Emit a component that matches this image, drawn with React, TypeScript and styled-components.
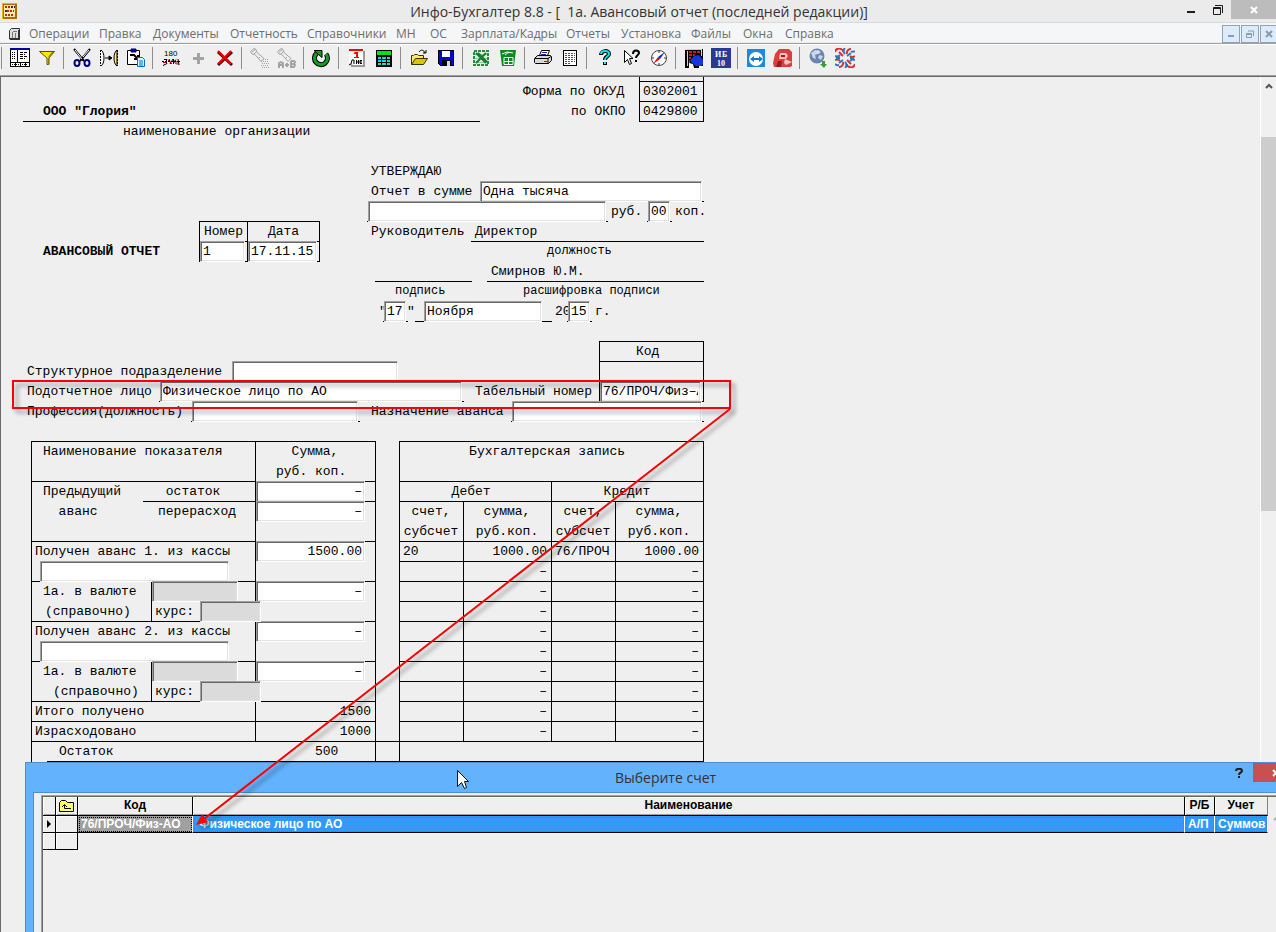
import React from "react";
import styled, { createGlobalStyle, css } from "styled-components";

const UI = `"Open Sans", "Noto Sans", sans-serif`;
const MONO = `"Liberation Mono", monospace`;
const GREY = "#efefef";

const Global = createGlobalStyle`
  * { box-sizing: border-box; }
  body { margin: 0; background: ${GREY}; }
  button, input { font: inherit; color: inherit; }
  button { border: 0; padding: 0; background: none; }
`;

/* ---------- window frame ---------- */

const Page = styled.div`
  position: relative;
  display: flex;
  flex-direction: column;
  height: 100vh;
  overflow: hidden;
  background: ${GREY};
  font-family: ${UI};
`;

const TitleBar = styled.header`
  display: flex;
  align-items: flex-start;
  justify-content: space-between;
  height: 23px;
  background: #ebebeb;
  border-bottom: 1px solid #dadada;
`;

const TitleSide = styled.div<{ $end?: boolean }>`
  display: flex;
  flex: 1;
  justify-content: ${(p) => (p.$end ? "flex-end" : "flex-start")};
  padding-left: ${(p) => (p.$end ? 0 : 2)}px;
  padding-top: ${(p) => (p.$end ? 0 : 3)}px;
`;

const Title = styled.h1`
  margin: 0;
  font-size: 14px;
  line-height: 23px;
  font-weight: 400;
  color: #333;
  white-space: pre;
`;

const FrameButton = styled.button<{ $w: number; $bg?: string }>`
  display: flex;
  align-items: center;
  justify-content: center;
  width: ${(p) => p.$w}px;
  height: 19px;
  background: ${(p) => p.$bg ?? "transparent"};
`;

const MenuBar = styled.nav`
  display: flex;
  align-items: center;
  height: 22px;
  padding-left: 8px;
  background: #f5f6f7;
  border-bottom: 1px solid #fff;
  box-shadow: inset 0 -1px #a0a0a0, inset 0 -2px #ebebeb;
`;

const MenuItems = styled.div`
  display: flex;
  flex: 1;
  margin-left: 8px;
`;

const MenuItem = styled.button<{ $w: number }>`
  width: ${(p) => p.$w}px;
  font-size: 12px;
  line-height: 18px;
  color: #6d6d6d;
  text-align: left;
  white-space: nowrap;
`;

const MdiButtons = styled.div`
  display: flex;
  gap: 1px;
  margin-right: -2px;
`;

const MdiButton = styled.button`
  display: flex;
  align-items: center;
  justify-content: center;
  width: 18px;
  height: 18px;
  border: 1px solid #93a3b5;
  background: #dcebfa;
`;

const ToolBar = styled.div`
  display: flex;
  align-items: center;
  height: 32px;
  padding: 0 0 5px 1px;
  border-bottom: 1px solid #696969;
  box-shadow: inset 0 -1px #a0a0a0;
`;

const ToolButton = styled.button`
  display: flex;
  align-items: center;
  justify-content: center;
  width: 27px;
  height: 24px;
`;

const Divider = styled.span<{ $first?: boolean }>`
  width: 1px;
  height: 22px;
  margin: ${(p) => (p.$first ? "0 4px 0 0" : "0 4px 0 3px")};
  background: #8e8e8e;
`;

const Workspace = styled.main`
  position: relative;
  display: flex;
  flex: 1;
  min-height: 0;
  overflow: hidden;
  border-left: 1px solid #696969;
`;

const Sheet = styled.form`
  flex: 1;
  min-width: 0;
  overflow: hidden;
  padding-left: 6px;
  font-family: ${MONO};
  font-size: 13px;
  line-height: 20px;
  color: #000;
`;

const ScrollBar = styled.div`
  display: flex;
  flex-direction: column;
  align-items: stretch;
  width: 16px;
  border-left: 1px solid #fff;
  background: #f0f0f0;
`;

const ScrollArrow = styled.button`
  display: flex;
  justify-content: center;
  height: 60px;
  padding-top: 6px;
`;

const ScrollThumb = styled.div`
  height: 374px;
  background: #cdcdcd;
`;

/* ---------- form lines: one unit is one character, 8px ---------- */

const Row = styled.div<{ $h?: number }>`
  display: flex;
  height: ${(p) => p.$h ?? 20}px;
`;

type CellProps = {
  $n?: number;
  $line?: boolean;
  $box?: boolean;
  $center?: boolean;
  $bold?: boolean;
  $small?: boolean;
  $pad?: number;
};

const Cell = styled.div<CellProps>`
  flex: none;
  width: ${(p) => (p.$n ? `${p.$n * 8 + (p.$box || p.$line ? 1 : 0)}px` : "auto")};
  margin-right: ${(p) => (p.$box || p.$line ? -1 : 0)}px;
  padding-left: ${(p) => (p.$center ? 0 : p.$pad ?? 4)}px;
  font-size: ${(p) => (p.$small ? 12 : 13)}px;
  line-height: 19px;
  white-space: pre;
  text-align: ${(p) => (p.$center ? "center" : "left")};
  font-weight: ${(p) => (p.$bold ? 700 : 400)};
  ${(p) => (p.$line || p.$box) && css`border-bottom: 1px solid #000;`}
  ${(p) => p.$box && css`
    border-left: 1px solid #000;
    border-right: 1px solid #000;
  `}
`;

const Label = styled(Cell).attrs({ as: "label" })<{ htmlFor?: string }>``;

const FieldCell = styled(Cell)`
  padding: 0 1px 0 ${(p) => (p.$box ? 0 : 1)}px;
`;

const Field = styled.input<{ $right?: boolean }>`
  display: block;
  width: calc(100% - 1px);
  height: 21px;
  margin: -1px 0;
  padding: 0 2px;
  border: 1px solid;
  border-color: #a0a0a0 #fff #fff #a0a0a0;
  border-radius: 0;
  box-shadow: inset 1px 1px #696969, inset -1px -1px #e3e3e3;
  background: #fff;
  outline: none;
  text-align: ${(p) => (p.$right ? "right" : "left")};
  &:disabled { background: #dbdbdb; }
`;

/* ---------- form tables ---------- */

const Tables = styled.div`
  display: flex;
  align-items: flex-start;
  margin-left: 24px;
`;

const FormTable = styled.table<{ $w: number; $closed?: boolean }>`
  flex: none;
  width: ${(p) => p.$w}px;
  table-layout: fixed;
  border-collapse: separate;
  border-spacing: 0;
  border-right: 1px solid #000;
  border-bottom: ${(p) => (p.$closed ? 1 : 0)}px solid #000;
`;

const Col = styled.col<{ $w: number }>`
  width: ${(p) => p.$w}px;
`;

const Td = styled.td<{ $h?: number; $align?: string; $l?: boolean; $pad?: number }>`
  height: ${(p) => p.$h ?? 20}px;
  padding: 0 4px 0 ${(p) => p.$pad ?? 3}px;
  border-top: 1px solid #000;
  border-left: ${(p) => (p.$l === false ? 0 : 1)}px solid #000;
  vertical-align: top;
  text-align: ${(p) => p.$align ?? "left"};
  font-weight: 400;
  line-height: 19px;
  white-space: pre;
`;

const SumTd = styled(Td)`
  padding: 0 9px 0 0;
`;

const Lines = styled.div`
  margin-bottom: -1px;
  line-height: 20px;
`;

const Line = styled.div<{ $pad?: number }>`
  display: flex;
  height: 20px;
  padding-left: ${(p) => p.$pad ?? 0}px;
  &:last-child { height: 19px; }
`;

const Slot = styled.div<{ $w: number }>`
  flex: none;
  width: ${(p) => p.$w}px;
`;

const LastTd = styled(Td)`
  padding: 0 0 0 15px;
`;

const Rest = styled.div`
  display: flex;
  height: 20px;
  padding-left: 12px;
  border-bottom: 1px solid #000;
`;

const Bridge = styled.div`
  align-self: flex-end;
  width: 23px;
  height: 21px;
  border: solid #000;
  border-width: 1px 0;
`;

/* ---------- account picker window ---------- */

const Dialog = styled.section`
  position: absolute;
  left: 24px;
  right: -30px;
  bottom: 0;
  height: 170px;
  display: flex;
  flex-direction: column;
  padding: 0 8px;
  border: 1px solid #4b8fd2;
  border-bottom: 0;
  background: #63b2fe;
`;

const DialogBar = styled.div`
  display: flex;
  justify-content: space-between;
  height: 29px;
  flex: none;
`;

const DialogSide = styled.div`
  display: flex;
  flex: 1;
  justify-content: flex-end;
  margin-right: -1px;
`;

const DialogTitle = styled.h2`
  margin: 0;
  font-size: 14px;
  line-height: 29px;
  font-weight: 400;
  color: #333;
`;

const DialogBody = styled.div`
  flex: 1;
  display: flex;
  padding: 2px 7px 0;
  margin: 0 -1px;
  border: 1px solid #4b8fd2;
  border-bottom: 0;
  background: ${GREY};
`;

const Grid = styled.div`
  flex: 1;
  display: flex;
  align-items: flex-start;
  border: solid #a0a0a0;
  border-width: 1px 0 0 1px;
  box-shadow: inset 1px 1px #696969;
  padding: 1px 2px 0 1px;
`;

const GridTable = styled.table`
  flex: 1;
  width: 100%;
  table-layout: fixed;
  border-collapse: separate;
  border-spacing: 0;
  font-family: "Liberation Sans", sans-serif;
  font-size: 12px;
  line-height: 16px;
  font-weight: 700;
`;

const GridTh = styled.th<{ $light?: boolean }>`
  height: 19px;
  padding: 0;
  border-bottom: 1px solid #000;
  border-right: 1px solid ${(p) => (p.$light ? "#808080" : "#000")};
  box-shadow: inset 1px 1px #fff, inset 0 -1px #a0a0a0;
  vertical-align: top;
  overflow: hidden;
  svg { display: block; margin: 3px auto 0; }
`;

const GridTd = styled.td<{ $tone?: "grey" | "blue" }>`
  height: 17px;
  padding: 0 0 0 3px;
  overflow: hidden;
  white-space: nowrap;
  border-bottom: 1px solid #000;
  border-right: 1px solid #000;
  box-shadow: inset 1px 1px #fff;
  svg { display: block; }
  ${(p) => p.$tone && css`
    color: #fff;
    line-height: 14px;
    border-right-color: #fff;
    box-shadow: none;
    background: ${p.$tone === "blue" ? "#3399ff" : "#a0a0a0"};
    outline: 1px dotted ${p.$tone === "blue" ? "#c06010" : "#000"};
    outline-offset: -2px;
  `}
`;

const GridScroll = styled.div`
  width: 20px;
  padding: 7px 0 0 5px;
`;

const Overlay = styled.svg`
  position: absolute;
  left: 0;
  top: 0;
  pointer-events: none;
`;

/* ---------- toolbar drawings ---------- */

const Torch = () => (
  <g fill="none" stroke="#a3a3a3">
    <path d="M.5 3.500L4 .5l2 1 1 3 7 6-3 3-6-7-3-.5z" />
    <path d="M2 4l4-3M4 6l3-3M9 9l1 1" />
  </g>
);

const icons: Record<string, React.ReactNode> = {
  "Журнал": (
    <g shapeRendering="crispEdges" fill="none">
      <path fill="#fff" stroke="#000" d="M.5.5h19v18H.5z" />
      <path fill="#0000a8" d="M0 0h20v2H0z" />
      <path stroke="#000" d="M7.500 2v12M0 14.500h20M5.500 14v5M10.500 14v5M15.500 14v5" />
      <path stroke="#000" strokeDasharray="1 1" d="M2 4.500h4M2 6.500h4M2 8.500h4M2 10.500h4M2 16.500h16" />
      <path stroke="#000" strokeDasharray="3 1" d="M10 4.500h7M10 6.500h5M10 8.500h7M10 10.500h5" />
    </g>
  ),
  "Фильтр": (
    <g>
      <path fill="#ffe800" stroke="#5a5200" d="M2.500 3.500h15l-5.500 6.500v6.500h-2v-6.500z" />
      <path fill="#8a7b00" d="M11 9h1l5-5h-2zM11 10h1v7h-1z" />
    </g>
  ),
  "Вырезать": (
    <g fill="none">
      <path stroke="#000" strokeWidth="2" d="M2 1l10 12M18 1L8 13" />
      <path stroke="#fff" d="M3 2l7 9M17 2l-6 7" />
      <g stroke="#000080" strokeWidth="2"><ellipse cx="5" cy="15" rx="2.500" ry="3" /><ellipse cx="15" cy="15" rx="2.500" ry="3" /></g>
    </g>
  ),
  "Связать": (
    <g>
      <path fill="none" stroke="#000" strokeDasharray="2 1" d="M1.500 2v16M18.500 2v16" />
      <path fill="#fff" stroke="#000" d="M2 2c4 2 4 14 0 16" />
      <path fill="#ffe95a" stroke="#000" d="M18 2c-4 2-4 14 0 16z" />
      <path stroke="#000" fill="#000" d="M6 10h5M10 8l3 2-3 2z" />
    </g>
  ),
  "Вставить": (
    <g>
      <path fill="#fff" stroke="#000" d="M1.500 2.500h12v14h-12z" />
      <path fill="#0000b0" stroke="#000080" d="M5 1h5v3H5z" />
      <path stroke="#000" strokeWidth="2" fill="none" d="M4 7h4l4 4M12 7v4H8" />
      <path fill="#d8f4ff" stroke="#0070c0" d="M11.500 9.500h5l2 2v7h-7z" />
      <path stroke="#0070c0" d="M13 13h4M13 15h4M13 17h4" />
    </g>
  ),
  "Сумма": (
    <g>
      <text x="3" y="8" fontSize="8" fontFamily="Liberation Sans, sans-serif">180</text>
      <g fill="none">
        <path stroke="#000" d="M3 11.500h3l-1 2 1 2-4 2M8 11l2 5M12 11l-3 5M12.500 11v5M15 11.500l-2 2 3 3M16 13.500h3M17 11l1 6" />
        <path stroke="#c00000" d="M2 14.500h3M7 12l4 4M14 12l4 5" />
        <path stroke="#000" d="M1 13.500h18" strokeDasharray="2 1" />
      </g>
    </g>
  ),
  "Добавить": <path fill="#a3a3a3" d="M9 5h3v4h4v3h-4v4H9v-4H5V9h4z" />,
  "Удалить": (
    <g fill="none">
      <path stroke="#4a0000" strokeWidth="3" d="M3 4l14 13M17 4L3 17" />
      <path stroke="#f00000" strokeWidth="2" d="M3 3l13 13M16 3L3 16" />
    </g>
  ),
  "Поиск": (
    <g><Torch /><path stroke="#a3a3a3" strokeDasharray="1 1" d="M13 11.500h5M11 13.500h8M12 15.500h7M11 17.500h8M12 19.500h7" /></g>
  ),
  "Замена": (
    <g>
      <Torch />
      <g fill="none" stroke="#a3a3a3" strokeWidth="2"><path d="M2 20v-5l2-1 2 1v5M2 17h4M8 17h4M10 15v4M14 13v6h3l1-2-1-1h-3M14 13h3l1 1-1 2" /></g>
    </g>
  ),
  "Обновить": (
    <g fill="none">
      <path stroke="#000" strokeWidth="5" d="M5 5a6.500 6.500 0 1 0 9 1" />
      <path stroke="#12a020" strokeWidth="3" d="M5 5a6.500 6.500 0 1 0 9 1" />
      <path fill="#12a020" stroke="#000" d="M2 2.500h8v7z" />
    </g>
  ),
  "Календарь": (
    <g>
      <path fill="#9a9a9a" d="M4 3h14v16H4z" />
      <path fill="#fff" d="M2 1h14v16H6l-4-3z" />
      <path fill="#f00" d="M2 1h14v2H2zM8 4h3v5h1v1H7V9h2V6H7V5z" />
      <path stroke="#000" fill="none" d="M2 17l2-1 1-4h2v4M9.500 12v4M9 14h2.500M11.500 12v4M15 12.500h-2v3h2M13 14h2" />
    </g>
  ),
  "Калькулятор": (
    <g shapeRendering="crispEdges">
      <path fill="#000" d="M2 2h16v17H2z" />
      <path fill="#00e020" d="M3 3h14v4H3z" />
      <path fill="#18d8d8" d="M4 9h3v2H4zM8 9h4v2H8zM13 9h3v2h-3zM4 12h3v2H4zM8 12h4v2H8zM13 12h3v2h-3zM4 15h3v2H4zM8 15h4v2H8zM13 15h3v2h-3z" />
    </g>
  ),
  "Открыть": (
    <g>
      <path fill="#ffe95a" stroke="#3a3300" d="M2.500 16.500v-9h2l1-1h3l1 1h5v3" />
      <path fill="#d8c800" stroke="#3a3300" d="M2.500 16.500l4-6h12l-4 6z" />
      <path fill="none" stroke="#000" d="M10 4c2-3 5-2 6 1M17 2v3h-3" />
    </g>
  ),
  "Сохранить": (
    <g shapeRendering="crispEdges">
      <path fill="#0000e0" stroke="#000" d="M2.500 2.500h15v15h-13l-2-2z" />
      <path fill="#fff" d="M6 3h8v6H6z" />
      <path fill="#000" d="M6 12h9v6H6z" />
      <path fill="#d8d8d8" d="M11 13h3v5h-3z" />
    </g>
  ),
  "Excel": (
    <g>
      <path fill="#dff0e2" stroke="#2a8a3e" strokeWidth="2" strokeDasharray="3 1" d="M3 3h14v14H3z" />
      <path stroke="#8fc79c" d="M4 6.500h12M4 10.500h12M4 14.500h12" />
      <path stroke="#1a7a30" strokeWidth="2" d="M5 5l10 10M7 5l9 9M15 5L5 15" />
    </g>
  ),
  "Таблица": (
    <g>
      <path fill="#0c8a1c" d="M2 2h16l-2 16H4z" />
      <path fill="none" stroke="#fff" d="M4 6l5-2 6 1M6 9.500h9v7H6zM10.500 9v8M6 13.500h9M7 7l4-3" />
    </g>
  ),
  "Печать": (
    <g>
      <path fill="#fff" stroke="#000" d="M6.500 7.500l2-5h8l-2 5z" />
      <path stroke="#2030b0" d="M9 4.500h5M8 6.500h5" />
      <path fill="#d8d8d8" stroke="#000" d="M1.500 10.500l3-3h13l1 1v4l-3 3h-13l-1-1z" />
      <path fill="none" stroke="#000" d="M2 10.500h13v5M15 10.500l3-2" />
      <path stroke="#d00000" d="M11 13.500h3" />
    </g>
  ),
  "Просмотр": (
    <g shapeRendering="crispEdges">
      <path fill="#fff" stroke="#000" d="M3.500 2.500h13v15h-13z" />
      <path stroke="#555" strokeDasharray="2 1" d="M5 5.500h10M5 7.500h10M5 9.500h10M5 11.500h10M5 13.500h10M5 15.500h6" />
    </g>
  ),
  "Справка": (
    <g fill="none">
      <path stroke="#000" strokeWidth="4" d="M6 7c0-5 8-5 8-1 0 3-4 2-4 6M10 14v3" />
      <path stroke="#18dfe8" strokeWidth="2" d="M6 6c0-4 8-4 8 0 0 3-4 2-4 6M10 14v2" />
    </g>
  ),
  "Что это": (
    <g>
      <path fill="#fff" stroke="#000" d="M2.500 2.500v12l3-3 2 5 2-1-2-5h3.500z" />
      <path fill="none" stroke="#000" strokeWidth="2" d="M11 6c0-5 6-4 6-1 0 2-3 2-3 5M14 12v2" />
    </g>
  ),
  "Навигатор": (
    <g>
      <circle cx="10" cy="10" r="7.500" fill="#fff" stroke="#444" />
      <path fill="#e00000" d="M4 16l5-7 2 2z" />
      <path fill="#1020d0" d="M16 4l-5 7-2-2z" />
      <path stroke="#333" d="M10 3v2M10 15v2M3 10h2M15 10h2" />
    </g>
  ),
  "Выход": (
    <g>
      <path fill="#000" d="M1 1h18v19H1z" />
      <path fill="#ffe000" d="M1 1h17v1H1zM3 3h1v15H3zM17 2h1v6h-1z" />
      <path fill="#c02020" d="M5 3h3v2H5zM9 3h3v2H9zM13 3h3v2h-3zM5 6h3v2H5zM9 6h2v2H9zM5 9h2v2H5zM5 12h1v4H5z" />
      <path fill="#1438e0" d="M6 13l4-5 5-1 4 5v4l-2 2h-5z" />
      <path fill="#fff" d="M5 15l4 1 1 4H5zM15 18h4v2h-4z" />
    </g>
  ),
  "ИБ 10": (
    <g>
      <path fill="#2a3a94" d="M0 0h20v20H0z" />
      <g fill="#fff" fontFamily="Liberation Serif, serif" fontWeight="700" fontSize="8">
        <text x="4" y="9">И</text><text x="11" y="9">Б</text><text x="6" y="18">10</text>
      </g>
    </g>
  ),
  "TeamViewer": (
    <g>
      <path fill="#1a8ae0" d="M1 1h18v18H1z" />
      <circle cx="10" cy="11" r="7" fill="#fff" />
      <path fill="#1a78d0" d="M4 11l4-3v2h5V8l4 3-4 3v-2H8v2z" />
    </g>
  ),
  "Удалённый доступ": (
    <g>
      <path fill="#d84040" d="M6 1h10l3 3v14l-2 1H1l-1-4 2-9z" />
      <path fill="#f6c4bc" d="M7 5h6l2 3-2 3H6zM12 11l7 3-6 3-2-2z" />
      <path fill="#a01818" d="M8 7h4v2H8zM5 13h4l-1 6H3z" />
    </g>
  ),
  "Интернет": (
    <g>
      <circle cx="9" cy="8" r="7.500" fill="#6a84b4" />
      <path fill="#c8d6ec" d="M3 5l4-3 4 1-1 3-3 1 1 4-3-1zM11 7l4 1-2 4-3-2z" />
      <path fill="#e8eef8" d="M8 3l3-1 2 3-3 1z" opacity=".7" />
      <path fill="#32a032" d="M14 13h3v3h2l-3 4-4-4h2z" />
    </g>
  ),
  "Сервис": (
    <g fill="none" strokeWidth="2">
      <path stroke="#d83030" d="M0 4a4 4 0 0 1 7-2M4 4l4 4M8 1v3M16 1a4 4 0 0 0-4 5M20 8a4 4 0 0 1-5 0M0 12a4 4 0 0 1 5 1M4 19a4 4 0 0 0 4-5M12 12l4 4M12 19v-3M20 16a4 4 0 0 1-7 2" />
      <path stroke="#2878c0" d="M0 8a4 4 0 0 0 5-1M10 0a4 4 0 0 0 0 6M20 4a4 4 0 0 0-4 0M12 8l4-3M8 12l-4 3M0 16a4 4 0 0 0 4 1M10 20a4 4 0 0 0 0-6M20 12a4 4 0 0 0-5 1" />
      <path stroke="#2878c0" d="M1 10h4M15 10h4" />
    </g>
  ),
};

const toolGroups: string[][] = [
  ["Журнал", "Фильтр"],
  ["Вырезать", "Связать", "Вставить"],
  ["Сумма", "Добавить", "Удалить"],
  ["Поиск", "Замена"],
  ["Обновить"],
  ["Календарь", "Калькулятор"],
  ["Открыть", "Сохранить"],
  ["Excel", "Таблица"],
  ["Печать", "Просмотр"],
  ["Справка", "Что это", "Навигатор"],
  ["Выход", "ИБ 10"],
  ["TeamViewer", "Удалённый доступ"],
  ["Интернет", "Сервис"],
];

const menu: [string, number][] = [
  ["Операции", 70], ["Правка", 54], ["Документы", 77], ["Отчетность", 77],
  ["Справочники", 89], ["МН", 34], ["ОС", 31], ["Зарплата/Кадры", 105],
  ["Отчеты", 55], ["Установка", 70], ["Файлы", 52], ["Окна", 42], ["Справка", 50],
];

/* ---------- parts ---------- */

type InputProps = { n: number; label: string; id?: string; value?: string; box?: boolean };

const InputCell = ({ n, label, id, value = "", box }: InputProps) => (
  <FieldCell $n={n} $box={box} $line={!box}>
    <Field id={id} aria-label={id ? undefined : label} defaultValue={value} />
  </FieldCell>
);

const SumCell = ({ h, label, value }: { h?: number; label: string; value: string }) => (
  <SumTd $h={h}>
    <Field $right aria-label={label} defaultValue={value} />
  </SumTd>
);

const Advance = ({ no, sum, indent }: { no: number; sum: string; indent: number }) => (
  <>
    <tr>
      <Td colSpan={3} $h={40}>
        <Line>{`Получен аванс ${no}. из кассы`}</Line>
        <Line $pad={5}>
          <Slot $w={190}><Field aria-label={`Касса ${no}`} /></Slot>
        </Line>
      </Td>
      <SumCell h={40} label={`Сумма аванса ${no}`} value={sum} />
    </tr>
    <tr>
      <Td colSpan={2} $h={40}>
        <Line $pad={8}>1а. в валюте</Line>
        <Line $pad={indent}>(справочно)</Line>
      </Td>
      <Td $h={40} $pad={0}>
        <Line><Slot $w={87}><Field disabled aria-label={`Валюта ${no}`} /></Slot></Line>
        <Line $pad={3}>
          <Slot $w={45}>курс:</Slot>
          <Slot $w={62}><Field disabled aria-label={`Курс ${no}`} /></Slot>
        </Line>
      </Td>
      <SumCell h={40} label={`Сумма в валюте ${no}`} value="–" />
    </tr>
  </>
);

const IndicatorTable = () => (
  <FormTable $w={345}>
    <colgroup>
      <Col $w={112} /><Col $w={8} /><Col $w={104} /><Col $w={120} />
    </colgroup>
    <tbody>
      <tr>
        <Td as="th" colSpan={3} $h={40} $pad={11}>Наименование показателя</Td>
        <Td as="th" $h={40} $align="center"><Lines>{"Сумма,\nруб. коп. "}</Lines></Td>
      </tr>
      <tr>
        <Td rowSpan={2} $h={60} $pad={11}><Lines>{"Предыдущий\n  аванс"}</Lines></Td>
        <Td colSpan={2} $l={false} $align="center" $pad={0}>остаток </Td>
        <SumCell label="Остаток" value="–" />
      </tr>
      <tr>
        <Td colSpan={2} $h={40} $l={false} $align="center" $pad={0}>перерасход</Td>
        <SumCell h={40} label="Перерасход" value="–" />
      </tr>
      <Advance no={1} sum="1500.00" indent={10} />
      <Advance no={2} sum="–" indent={18} />
      <tr><Td colSpan={3}>Итого получено</Td><Td $align="right">1500</Td></tr>
      <tr><Td colSpan={3}>Израсходовано</Td><Td $align="right">1000</Td></tr>
      <tr>
        <LastTd colSpan={4} $h={21}>
          <Rest><Slot $w={256}>Остаток</Slot>500</Rest>
        </LastTd>
      </tr>
    </tbody>
  </FormTable>
);

const entries = [["20", "1000.00", "76/ПРОЧ", "1000.00"], ...Array.from({ length: 9 }, () => ["", "–", "", "–"])];

const EntryTable = () => (
  <FormTable $w={305} $closed>
    <colgroup>
      <Col $w={64} /><Col $w={88} /><Col $w={64} /><Col $w={88} />
    </colgroup>
    <tbody>
      <tr><Td as="th" colSpan={4} $h={40} $align="center">Бухгалтерская запись </Td></tr>
      <tr>
        <Td as="th" colSpan={2} $align="center">Дебет </Td>
        <Td as="th" colSpan={2} $align="center">Кредит</Td>
      </tr>
      <tr>
        {["счет,\nсубсчет", "сумма,\nруб.коп.", "счет,\nсубсчет", "сумма,\nруб.коп."].map((t, i) => (
          <Td as="th" key={i} $h={40} $align="center"><Lines>{t}</Lines></Td>
        ))}
      </tr>
      {entries.map((r, i) => (
        <tr key={i}>
          {r.map((t, j) => <Td key={j} $align={j % 2 ? "right" : "left"}>{t}</Td>)}
        </tr>
      ))}
      <tr><Td colSpan={4} /></tr>
    </tbody>
  </FormTable>
);

const ReportForm = () => (
  <Sheet>
    <Row $h={5}><Cell $n={79} /><Cell $n={8} $box /></Row>
    <Row><Cell $n={64} /><Cell $n={15}>Форма по ОКУД</Cell><Cell $n={8} $box $pad={3}>0302001</Cell></Row>
    <Row>
      <Cell $n={2} /><Cell $n={57} $line $bold $pad={20}>ООО "Глория"</Cell><Cell $n={11} />
      <Cell $n={9}>по ОКПО</Cell><Cell $n={8} $box $pad={3}>0429800</Cell>
    </Row>
    <Row><Cell $n={14} /><Cell>наименование организации</Cell></Row>
    <Row />
    <Row><Cell $n={45} /><Cell>УТВЕРЖДАЮ</Cell></Row>
    <Row>
      <Cell $n={45} /><Label $n={14} htmlFor="total">Отчет в сумме</Label>
      <InputCell n={28} id="total" label="Отчет в сумме" value="Одна тысяча" />
    </Row>
    <Row>
      <Cell $n={24} /><Cell $n={15} $line /><Cell $n={6} />
      <InputCell n={30} label="Сумма прописью" /><Cell $n={5}>руб.</Cell>
      <InputCell n={3} label="Копейки" value="00" /><Cell>коп.</Cell>
    </Row>
    <Row>
      <Cell $n={24} /><Cell $n={6} $box $center>Номер</Cell><Cell $n={9} $box $center>Дата</Cell><Cell $n={6} />
      <Cell $n={13}>Руководитель</Cell><Cell $n={29} $line>Директор</Cell>
    </Row>
    <Row>
      <Cell $n={4} /><Cell $n={20} $bold>АВАНСОВЫЙ ОТЧЕТ</Cell>
      <InputCell n={6} box label="Номер" value="1" /><InputCell n={9} box label="Дата" value="17.11.15" />
      <Cell $n={28} /><Cell $small>должность</Cell>
    </Row>
    <Row><Cell $n={46} /><Cell $n={12} $line /><Cell $n={2} /><Cell $n={27} $line>Смирнов Ю.М.</Cell></Row>
    <Row><Cell $n={48} /><Cell $n={16} $small>подпись</Cell><Cell $small>расшифровка подписи</Cell></Row>
    <Row>
      <Cell $n={46} /><Cell $n={1}>"</Cell><InputCell n={3} label="День" value="17" /><Cell $n={1} $pad={0}>"</Cell>
      <Cell $n={1} $line /><InputCell n={15} label="Месяц" value="Ноября" /><Cell $n={1} $line />
      <Cell $n={2}>20</Cell><InputCell n={3} label="Год" value="15" /><Cell>г.</Cell>
    </Row>
    <Row><Cell $n={74} /><Cell $n={13} $line /></Row>
    <Row><Cell $n={74} /><Cell $n={13} $box $center>Код </Cell></Row>
    <Row>
      <Cell $n={2} /><Label $n={26} htmlFor="unit">Структурное подразделение</Label>
      <InputCell n={21} id="unit" label="Структурное подразделение" />
      <Cell $n={25} /><Cell $n={13} $box />
    </Row>
    <Row>
      <Cell $n={2} /><Label $n={17} htmlFor="person">Подотчетное лицо</Label>
      <InputCell n={38} id="person" label="Подотчетное лицо" value="Физическое лицо по АО" />
      <Cell $n={1} /><Label $n={16} htmlFor="number">Табельный номер</Label>
      <InputCell n={13} box id="number" label="Табельный номер" value="76/ПРОЧ/Физ–АО" />
    </Row>
    <Row>
      <Cell $n={2} /><Label $n={21} htmlFor="job">Профессия(должность)</Label>
      <InputCell n={21} id="job" label="Профессия(должность)" />
      <Cell $n={1} /><Label $n={18} htmlFor="purpose">Назначение аванса</Label>
      <InputCell n={24} id="purpose" label="Назначение аванса" />
    </Row>
    <Row $h={19} />
    <Tables>
      <IndicatorTable />
      <Bridge />
      <EntryTable />
    </Tables>
  </Sheet>
);

const AccountDialog = () => (
  <Dialog aria-label="Выберите счет">
    <DialogBar>
      <DialogSide />
      <DialogTitle>Выберите счет</DialogTitle>
      <DialogSide>
        <FrameButton $w={28} aria-label="Помощь">
          <svg width="8" height="10" fill="none" stroke="#1c1c1c" strokeWidth="2"><path d="M1 3c0-3 6-3 6 0 0 2-3 1-3 4M4 8v2" /></svg>
        </FrameButton>
        <FrameButton $w={45} $bg="#c75050" aria-label="Закрыть">
          <svg width="8" height="8" stroke="#fff" strokeWidth="2"><path d="M1 1l6 6M7 1L1 7" /></svg>
        </FrameButton>
      </DialogSide>
    </DialogBar>
    <DialogBody>
      <Grid>
        <GridTable>
          <colgroup>
            <Col $w={13} /><Col $w={22} /><Col $w={115} />
            <col /><Col $w={30} /><Col $w={53} />
          </colgroup>
          <thead>
            <tr>
              <GridTh />
              <GridTh>
                <svg width="16" height="13">
                  <path fill="#ffff60" stroke="#000" d="M.5 11.500v-9l2-2h4l2 2h6v9z" />
                  <path fill="none" stroke="#000" d="M12 8.500H5.500V5M3 7l2.500-2.500L8 7" />
                </svg>
              </GridTh>
              <GridTh>Код</GridTh>
              <GridTh>Наименование</GridTh>
              <GridTh>Р/Б</GridTh>
              <GridTh $light>Учет</GridTh>
            </tr>
          </thead>
          <tbody>
            <tr>
              <GridTd><svg width="6" height="8"><path d="M1 0l4 4-4 4z" /></svg></GridTd>
              <GridTd />
              <GridTd $tone="grey">76/ПРОЧ/Физ-АО</GridTd>
              <GridTd $tone="blue">&nbsp;Физическое лицо по АО</GridTd>
              <GridTd $tone="blue">А/П</GridTd>
              <GridTd $tone="blue">Суммов</GridTd>
            </tr>
            <tr><GridTd /><GridTd /></tr>
          </tbody>
        </GridTable>
        <GridScroll>
          <svg width="10" height="6" fill="none" stroke="#b0b0b0" strokeWidth="2"><path d="M1 5l4-4 4 4" /></svg>
        </GridScroll>
      </Grid>
    </DialogBody>
  </Dialog>
);

export default function App() {
  return (
    <Page>
      <Global />
      <TitleBar>
        <TitleSide>
          <svg width="15" height="16">
            <path fill="#ffe9b0" stroke="#b06a00" strokeWidth="2" d="M1 1h13v14H1z" />
            <path stroke="#f0b000" d="M.5 0v16M0 .5h15" />
            <path stroke="#c03010" strokeWidth="2" strokeDasharray="2 1" d="M3 4h5M5 8h7M3 12h9" />
            <path stroke="#333" strokeWidth="2" strokeDasharray="2 1" d="M9 4h4M3 8h2" />
          </svg>
        </TitleSide>
        <Title>{"Инфо-Бухгалтер 8.8 - [  1а. Авансовый отчет (последней редакции)]"}</Title>
        <TitleSide $end>
          <FrameButton $w={26} aria-label="Свернуть">
            <svg width="8" height="8"><path fill="#1c1c1c" d="M0 5h8v2H0z" /></svg>
          </FrameButton>
          <FrameButton $w={27} aria-label="Развернуть">
            <svg width="10" height="10" fill="none" stroke="#1c1c1c"><path d="M.5 2.500h7v7h-7zM0 3.500h8M2 .5h7.500V8" /></svg>
          </FrameButton>
          <FrameButton $w={45} $bg="#bcbcbc" aria-label="Закрыть окно">
            <svg width="8" height="8" stroke="#fff" strokeWidth="2"><path d="M1 1l6 6M7 1L1 7" /></svg>
          </FrameButton>
        </TitleSide>
      </TitleBar>
      <MenuBar>
        <svg width="13" height="13">
          <path fill="#e0e0e0" stroke="#333" d="M1.500 3.500l2-2h8v10.500h-10z" />
          <path stroke="#777" d="M4.500 5v6M7.500 6v6M5 4.500h4" />
          <path stroke="#333" strokeWidth="2" d="M2 12h10M11 3v9" />
        </svg>
        <MenuItems>
          {menu.map(([name, w]) => <MenuItem key={name} $w={w}>{name}</MenuItem>)}
        </MenuItems>
        <MdiButtons>
          <MdiButton aria-label="Свернуть документ"><svg width="8" height="8"><path fill="#8b9bab" d="M1 5h6v2H1z" /></svg></MdiButton>
          <MdiButton aria-label="Восстановить документ">
            <svg width="8" height="8" fill="none" stroke="#8b9bab"><path d="M.5 3.500h5v4h-5zM0 4.500h6M2 1h5.500v5" /></svg>
          </MdiButton>
          <MdiButton aria-label="Закрыть документ"><svg width="8" height="8" stroke="#8b9bab" strokeWidth="2"><path d="M1 1l6 6M7 1L1 7" /></svg></MdiButton>
        </MdiButtons>
      </MenuBar>
      <ToolBar role="toolbar" aria-label="Панель инструментов">
        {toolGroups.map((group, i) => (
          <React.Fragment key={i}>
            <Divider $first={i === 0} />
            {group.map((name) => (
              <ToolButton key={name} aria-label={name} title={name}>
                <svg width="20" height="20" viewBox="0 0 20 20">{icons[name]}</svg>
              </ToolButton>
            ))}
          </React.Fragment>
        ))}
      </ToolBar>
      <Workspace>
        <ReportForm />
        <ScrollBar>
          <ScrollArrow type="button" aria-label="Прокрутить вверх">
            <svg width="8" height="7" fill="none" stroke="#555" strokeWidth="2"><path d="M1 5l3-3 3 3" /></svg>
          </ScrollArrow>
          <ScrollThumb />
        </ScrollBar>
        <AccountDialog />
      </Workspace>
      <Overlay width="760" height="840" aria-hidden="true">
        <defs>
          <filter id="shade" x="-5%" y="-5%" width="115%" height="115%">
            <feDropShadow dx="4" dy="4" stdDeviation="2" floodColor="#000" floodOpacity="0.4" />
          </filter>
        </defs>
        <g filter="url(#shade)">
          <path fill="none" stroke="#fe0000" strokeWidth="2" d="M13 381h717v27H13z" />
          <path stroke="#fe0000" strokeWidth="2" d="M730 409L204 819" />
          <path fill="#fe0000" d="M196 825l6-11 6 8z" />
        </g>
        <path fill="#fff" stroke="#111" d="M457.500 770.500v16l4-4 3 6 2-1-2-6h4z" />
      </Overlay>
    </Page>
  );
}
